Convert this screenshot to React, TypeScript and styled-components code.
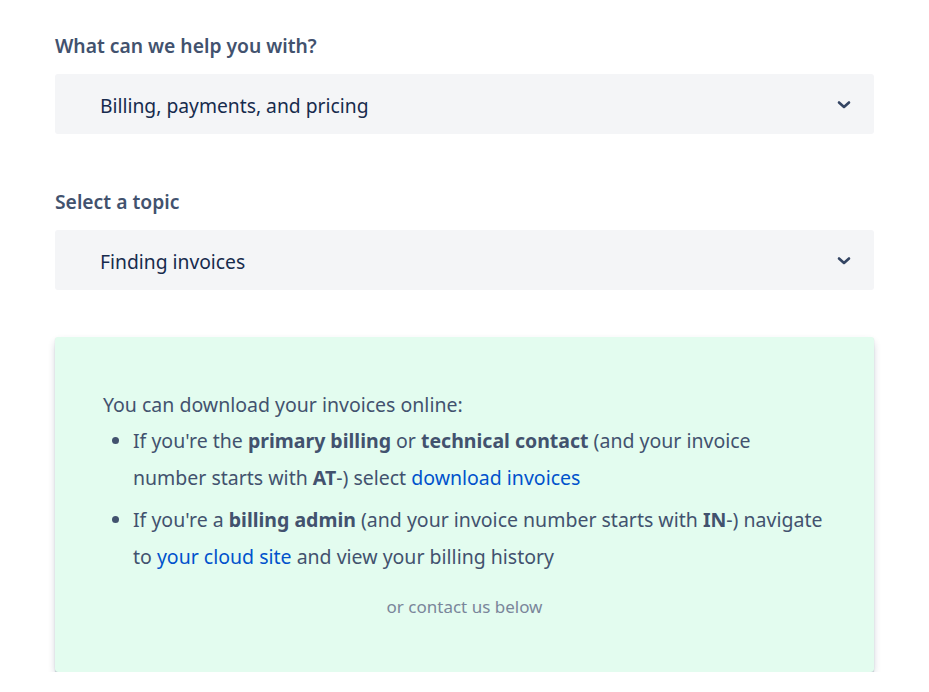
import React from 'react';
import styled, { createGlobalStyle } from 'styled-components';

const GlobalStyle = createGlobalStyle`
  html, body {
    margin: 0;
    padding: 0;
    background: #ffffff;
    font-family: "Noto Sans", "Open Sans", sans-serif;
  }
`;

const Page = styled.div`
  width: 819px;
  padding: 30px 0 0 55px;
  display: flex;
  flex-direction: column;
`;

const Field = styled.div<{ $gap?: number }>`
  display: flex;
  flex-direction: column;
  margin-bottom: ${p => p.$gap ?? 52}px;
`;

const Label = styled.label`
  font-size: 19.3px;
  font-weight: 600;
  color: #42526e;
  line-height: 32px;
  margin-bottom: 12px;
`;

const SelectBox = styled.div`
  height: 60px;
  background: #f4f5f7;
  border-radius: 3px;
  display: flex;
  align-items: center;
  justify-content: space-between;
  padding: 2px 23px 0 45px;
  box-sizing: border-box;
  font-size: 19.3px;
  color: #172b4d;
`;

const Chevron = () => (
  <svg width="14" height="10" viewBox="0 0 14 10">
    <path d="M2 2.5l5 4.5 5-4.5" fill="none" stroke="#344563" strokeWidth="2.6" strokeLinecap="round" strokeLinejoin="round" />
  </svg>
);

const Panel = styled.div`
  background: #e3fcef;
  border-radius: 3px;
  box-shadow: 0 1px 1px rgba(9, 30, 66, 0.25), 0 4px 8px -2px rgba(9, 30, 66, 0.3);
  padding: 49px 48px 47px;
  color: #42526e;
  font-size: 19.5px;
  line-height: 37px;
`;

const Intro = styled.p`
  margin: 0 0 -1px;
`;

const List = styled.ul`
  margin: 0 0 13px;
  padding-left: 30px;
  li {
    margin-bottom: 5px;
  }
`;

const Link = styled.a`
  color: #0052cc;
  text-decoration: none;
`;

const Note = styled.p`
  margin: 0;
  text-align: center;
  font-size: 17px;
  color: #7a869a;
`;

export default function App() {
  return (
    <Page>
      <GlobalStyle />
      <Field>
        <Label>What can we help you with?</Label>
        <SelectBox>
          <span>Billing, payments, and pricing</span>
          <Chevron />
        </SelectBox>
      </Field>
      <Field $gap={47}>
        <Label>Select a topic</Label>
        <SelectBox>
          <span>Finding invoices</span>
          <Chevron />
        </SelectBox>
      </Field>
      <Panel>
        <Intro>You can download your invoices online:</Intro>
        <List>
          <li>
            If you're the <b>primary billing</b> or <b>technical contact</b> (and your invoice number starts with <b>AT</b>-) select <Link href="#">download invoices</Link>
          </li>
          <li>
            If you're a <b>billing admin</b> (and your invoice number starts with <b>IN</b>-) navigate to <Link href="#">your cloud site</Link> and view your billing history
          </li>
        </List>
        <Note>or contact us below</Note>
      </Panel>
    </Page>
  );
}
